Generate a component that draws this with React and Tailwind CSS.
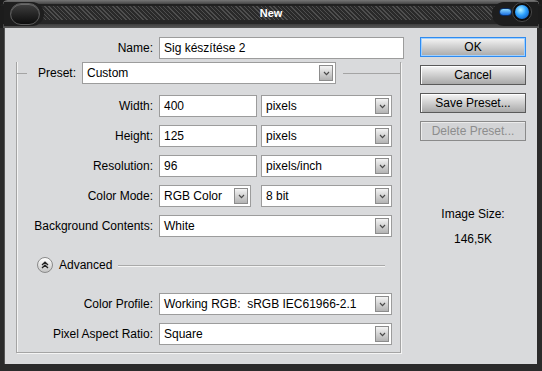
import React from 'react';

const font = { fontFamily: '"Liberation Sans", Arial, sans-serif' };

const Arrow = () => (
  <div className="w-[14px] h-[16px] mr-[2px] border border-[#8c8c8c] bg-gradient-to-b from-[#f4f4f4] to-[#b3b3b3] flex items-center justify-center shrink-0">
    <svg width="7" height="5" viewBox="0 0 7 5">
      <path d="M1 1 L3.5 3.6 L6 1" stroke="#4a4a4a" strokeWidth="1.2" fill="none" />
    </svg>
  </div>
);

const Select = ({ value, className }) => (
  <div className={`h-[22px] bg-white border border-[#9c9c9c] flex items-center justify-between pl-[4px] ${className}`}>
    <span className="whitespace-pre">{value}</span>
    <Arrow />
  </div>
);

const Input = ({ value, className }) => (
  <div className={`h-[22px] bg-white border border-[#9c9c9c] flex items-center pl-[4px] ${className}`}>
    <span className="whitespace-nowrap">{value}</span>
  </div>
);

const Row = ({ label, children, className = 'mt-[8px]' }) => (
  <div className={`flex items-center h-[22px] ${className}`}>
    <div className="w-[136px] text-right">{label}</div>
    <div className="ml-[6px] flex items-center">{children}</div>
  </div>
);

const Button = ({ children, kind }) => {
  if (kind === 'primary') {
    return (
      <div className="h-[20px] w-[106px] border border-[#2f8bf0] shadow-[inset_0_0_0_1px_#9fd0ff] bg-gradient-to-b from-[#f6f6f6] to-[#a9a9a9] flex items-center justify-center">
        {children}
      </div>
    );
  }
  if (kind === 'disabled') {
    return (
      <div className="h-[20px] w-[106px] border border-[#8a8a8a] bg-[#d3d4d6] text-[#8d8d8d] flex items-center justify-center shadow-[inset_1px_1px_0_#ececec]">
        {children}
      </div>
    );
  }
  return (
    <div className="h-[20px] w-[106px] border border-[#5a5a5a] bg-gradient-to-b from-[#f6f6f6] to-[#a9a9a9] flex items-center justify-center shadow-[inset_1px_1px_0_#fff]">
      {children}
    </div>
  );
};

export default function App() {
  return (
    <div className="w-[542px] h-[371px] flex flex-col bg-[#1b1b1b] text-[12px] text-black" style={font}>
      {/* title bar */}
      <div className="relative h-[28px] flex flex-col shrink-0 rounded-t-[8px] overflow-hidden bg-[#1c1c1c]">
        <div className="h-[4px] mx-[3px] rounded-t-[6px] bg-gradient-to-b from-[#777] to-[#454545]" />
        <div className="h-[2px] bg-[#202020]" />
        <div className="h-[14px] mx-[4px] bg-[repeating-linear-gradient(45deg,#2a2a2a_0px,#2a2a2a_2px,#4e4e4e_2px,#4e4e4e_3px)] flex items-center justify-center">
          <span className="text-white font-bold text-[11px] leading-none">New</span>
        </div>
        <div className="h-[4px] mx-[4px] bg-[#262626]" />
        <div className="h-[4px] mx-[3px] bg-gradient-to-b from-[#3c3c3c] to-[#5a5a5a]" />

        <div className="absolute left-[4px] top-[2px] w-[40px] h-[24px] bg-[#1e1e1e] rounded-r-[12px]" />
        <div className="absolute left-[10px] top-[3px] w-[30px] h-[22px] rounded-full border border-[#5c5c5c] bg-gradient-to-b from-[#404040] to-[#0d0d0d] shadow-[inset_0_1px_0_#6a6a6a]" />

        <div className="absolute right-[4px] top-[2px] w-[46px] h-[24px] bg-[#1e1e1e] rounded-l-[12px]" />
        <div className="absolute left-[499px] top-[8px] w-[13px] h-[8px] rounded-full border border-[#0a2f6a] bg-gradient-to-b from-[#8fdcff] to-[#1a6fe0]" />
        <div className="absolute left-[512px] top-[2px] w-[20px] h-[20px] rounded-full bg-[#0c0c0c] border border-[#4a4a4a] flex items-center justify-center">
          <div className="w-[14px] h-[14px] rounded-full bg-[radial-gradient(circle_at_40%_35%,#b8f4ff_0%,#2aa0ff_45%,#0a3f9e_100%)]" />
        </div>
      </div>

      {/* body */}
      <div className="flex-1 flex border-l-[4px] border-r-[5px] border-b-[7px] border-[#2b2b2b] bg-[#d9dadc] shadow-[inset_1px_0_0_#555]">
        <div className="w-[400px] pt-[9px]">
          <div className="flex items-center h-[22px]">
            <div className="w-[149px] text-right">Name:</div>
            <Input value="Sig készítése 2" className="ml-[6px] w-[245px]" />
          </div>

          <div className="mt-[14px] ml-[12px] w-[385px] border-l border-r border-b border-[#a4a4a4] shadow-[1px_1px_0_#f4f4f4,inset_1px_0_0_#f4f4f4] pb-[7px]">
            <div className="flex items-center h-[22px] -mt-[11px]">
              <div className="w-[10px] h-px bg-[#a4a4a4]" />
              <div className="w-[49px] text-right">Preset:</div>
              <Select value="Custom" className="ml-[6px] w-[254px]" />
              <div className="flex-1 ml-[7px] h-px bg-[#a4a4a4]" />
            </div>

            <Row label="Width:" className="mt-[11px]">
              <Input value="400" className="w-[98px]" />
              <Select value="pixels" className="ml-[4px] w-[131px]" />
            </Row>
            <Row label="Height:">
              <Input value="125" className="w-[98px]" />
              <Select value="pixels" className="ml-[4px] w-[131px]" />
            </Row>
            <Row label="Resolution:">
              <Input value="96" className="w-[98px]" />
              <Select value="pixels/inch" className="ml-[4px] w-[131px]" />
            </Row>
            <Row label="Color Mode:">
              <Select value="RGB Color" className="w-[92px]" />
              <Select value="8 bit" className="ml-[10px] w-[131px]" />
            </Row>
            <Row label="Background Contents:">
              <Select value="White" className="w-[233px]" />
            </Row>

            <div className="flex items-center h-[16px] mt-[20px] ml-[20px] mr-[15px]">
              <div className="w-[16px] h-[16px] rounded-full border border-[#8a8a8a] bg-gradient-to-b from-white to-[#c4c4c4] flex items-center justify-center">
                <svg width="8" height="8" viewBox="0 0 8 8">
                  <path d="M1 4 L4 1.2 L7 4 M1 7 L4 4.2 L7 7" stroke="#222" strokeWidth="1.3" fill="none" />
                </svg>
              </div>
              <span className="ml-[6px]">Advanced</span>
              <div className="flex-1 ml-[6px] h-px bg-[#a9a9a9] shadow-[0_1px_0_#f4f4f4]" />
            </div>

            <Row label="Color Profile:" className="mt-[20px]">
              <Select value="Working RGB:  sRGB IEC61966-2.1" className="w-[233px]" />
            </Row>
            <Row label="Pixel Aspect Ratio:">
              <Select value="Square" className="w-[233px]" />
            </Row>
          </div>
        </div>

        <div className="ml-[16px] pt-[9px] flex flex-col">
          <Button kind="primary">OK</Button>
          <div className="mt-[8px]"><Button>Cancel</Button></div>
          <div className="mt-[8px]"><Button>Save Preset...</Button></div>
          <div className="mt-[8px]"><Button kind="disabled">Delete Preset...</Button></div>
          <div className="mt-[66px] text-center leading-[14px]">Image Size:</div>
          <div className="mt-[11px] text-center leading-[14px]">146,5K</div>
        </div>
      </div>
    </div>
  );
}
